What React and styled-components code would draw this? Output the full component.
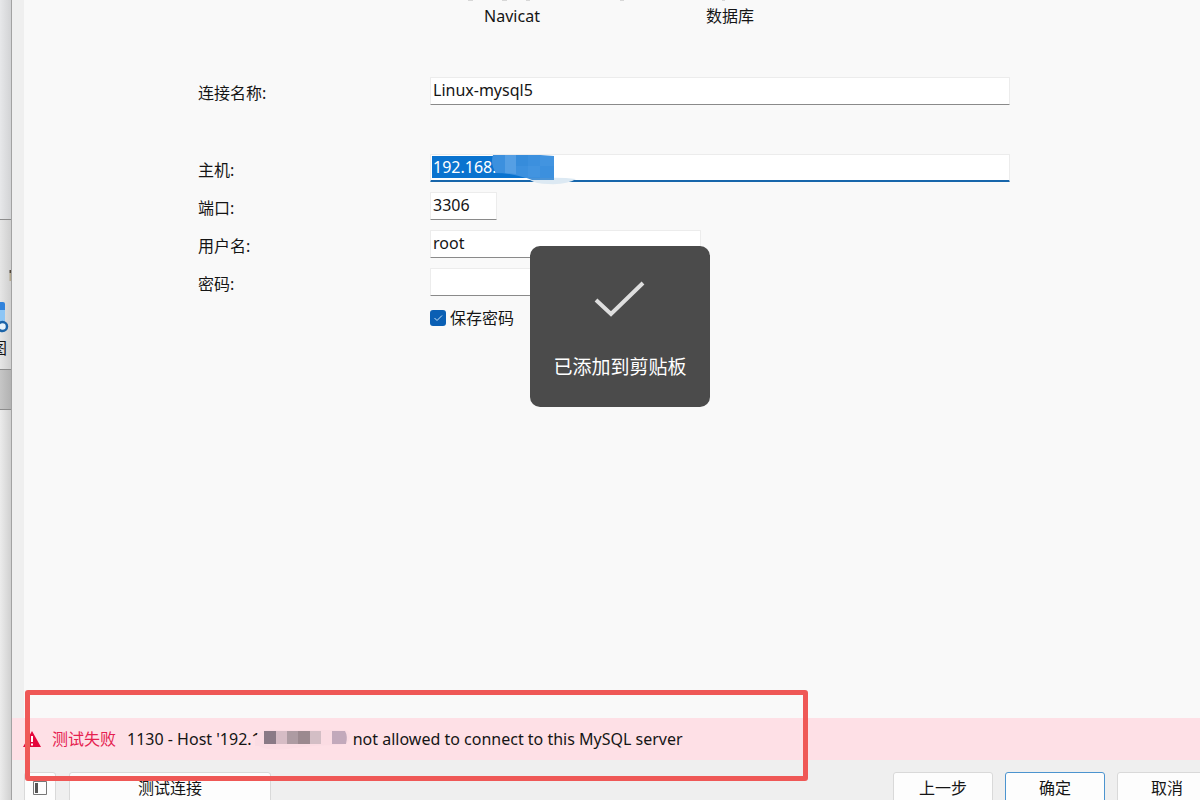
import React from "react";
import styled, { createGlobalStyle } from "styled-components";

const GlobalStyle = createGlobalStyle`
  * { box-sizing: border-box; }
  body {
    margin: 0;
    background: #f0f0f0;
    color: #151515;
    font-family: "Noto Sans", "Noto Sans CJK SC", sans-serif;
    font-size: 16px;
    line-height: 24px;
  }
  button, input { font: inherit; color: inherit; }
`;

const Screen = styled.div`
  position: relative;
  display: flex;
  height: 100vh;
  overflow: hidden;
`;

const BackWindow = styled.div`
  flex: none;
  width: 12px;
  display: flex;
  flex-direction: column;
  overflow: hidden;
  border-right: 1px solid #a2a2a2;
`;

const BackPane = styled.div`
  flex: ${(p) => (p.$height ? "none" : "1")};
  height: ${(p) => (p.$height ? `${p.$height}px` : "auto")};
  background: linear-gradient(to right, ${(p) => p.$from}, ${(p) => p.$to});
  border-bottom: ${(p) => (p.$height ? "1px solid #8c8c8c" : "0")};
`;

const BackToolbar = styled(BackPane)`
  display: flex;
  flex-direction: column;
  align-items: flex-start;
  padding-top: 48px;
`;

const BackLabel = styled.span`
  width: 16px;
  margin-left: -9px;
  font-size: 16px;
  line-height: 24px;
`;

const Dialog = styled.main`
  flex: 1;
  min-width: 0;
  display: flex;
  flex-direction: column;
`;

const Content = styled.section`
  flex: 1;
  min-height: 0;
  border-left: 12px solid #efefef;
  background: #f9f9f9;
`;

const Steps = styled.div`
  display: flex;
  padding: 4px 0 0 379px;
  height: 77px;
`;

const Step = styled.div`
  width: 218px;
  text-align: center;
`;

const Form = styled.form`
  display: grid;
  grid-template-columns: 232px 1fr;
  row-gap: 10px;
  padding: 0 190px 0 174px;
`;

const Label = styled.label`
  padding-top: 4px;
  height: 28px;
`;

const Field = styled.div`
  position: relative;
  height: 28px;
  margin-bottom: ${(p) => (p.$spaced ? "39px" : "0")};
`;

const TextInput = styled.input`
  display: block;
  width: ${(p) => p.$width || "100%"};
  height: 28px;
  padding: 0 2px 2px;
  border: 1px solid #ececec;
  border-bottom-color: #8a8a8a;
  border-radius: 1px;
  background: #fff;
  outline: none;
`;

const SelectedInput = styled(TextInput)`
  color: #fff;
  padding-bottom: 1px;
  border-bottom: 2px solid #1766ab;
  background: linear-gradient(#0a73cf, #0a73cf) 1px 1px / 122px 22px no-repeat #fff;
`;

const HostMask = styled.svg`
  position: absolute;
  left: 60px;
  top: 0;
`;

const CheckRow = styled.label`
  grid-column: 2;
  display: flex;
  align-items: center;
  gap: 4px;
`;

const Checkbox = styled.input`
  appearance: none;
  width: 16px;
  height: 16px;
  margin: 0;
  border-radius: 3px;
  background: #0a5fb4;
`;

const CheckBoxWrap = styled.span`
  position: relative;
  display: flex;
`;

const CheckMark = styled.svg`
  position: absolute;
  inset: 0;
  pointer-events: none;
`;

const Alert = styled.div`
  display: flex;
  align-items: center;
  height: 42px;
  padding-left: 11px;
  background: #fee0e6;
  white-space: pre;
`;

const AlertTitle = styled.span`
  margin: 0 11px;
  color: #e5204f;
`;

const AlertMask = styled.svg`
  flex: none;
  position: relative;
  margin-left: -6px;
`;

const Footer = styled.footer`
  display: flex;
  height: 40px;
  padding: 12px 0 0 12px;
  background: #efefef;
`;

const Button = styled.button`
  flex: none;
  display: flex;
  justify-content: center;
  align-items: center;
  width: ${(p) => p.$width}px;
  height: 32px;
  padding: 0;
  border: 1px solid ${(p) => (p.$primary ? "#4c94cf" : "#d9d9d9")};
  border-radius: 3px;
  background: #fdfdfd;
`;

const Actions = styled.div`
  display: flex;
  gap: 12px;
  margin: 0 -17px 0 auto;
`;

const TestButton = styled(Button)`
  margin-left: 13px;
`;

const Toast = styled.div`
  position: absolute;
  left: 530px;
  top: 246px;
  display: flex;
  flex-direction: column;
  align-items: center;
  width: 180px;
  height: 161px;
  padding-top: 34px;
  border-radius: 10px;
  background: #4b4b4b;
  color: #fff;
  font-size: 19px;
  line-height: 28px;
`;

const ToastText = styled.span`
  margin-top: 33px;
`;

const Highlight = styled.div`
  position: absolute;
  left: 25px;
  bottom: 19px;
  width: 783px;
  height: 91px;
  border: 5px solid #ef5856;
  border-radius: 3px;
  pointer-events: none;
`;

const StepTraces = styled.svg`
  position: absolute;
  left: 460px;
  top: 0;
`;

export default function App() {
  return (
    <>
      <GlobalStyle />
      <Screen>
        <BackWindow>
          <BackPane $height={220} $from="#e7e8ea" $to="#d2d3d5" />
          <BackToolbar $height={150} $from="#e6e6e6" $to="#cfcfcf">
            <svg width="12" height="68" viewBox="0 0 12 68">
              <path d="M10.500 2v3" stroke="#51463b" strokeWidth="2" />
              <path d="M10.500 5v8" stroke="#b3a78c" strokeWidth="2" />
              <path d="M0 34h3q2 0 2 2v6H0z" fill="#3183dc" />
              <path d="M0 42h5v13H0z" fill="#8ec6f5" />
              <circle cx="2.500" cy="58.500" r="4.500" fill="#e8f3fb" stroke="#1c64a8" strokeWidth="2.500" />
            </svg>
            <BackLabel>图</BackLabel>
          </BackToolbar>
          <BackPane $height={40} $from="#c6c6c6" $to="#b2b2b2" />
          <BackPane $from="#ececec" $to="#d0d0d0" />
        </BackWindow>

        <Dialog>
          <Content>
            <Steps>
              <Step>Navicat</Step>
              <Step>数据库</Step>
            </Steps>
            <Form>
              <Label htmlFor="name">连接名称:</Label>
              <Field $spaced>
                <TextInput id="name" defaultValue="Linux-mysql5" />
              </Field>
              <Label htmlFor="host">主机:</Label>
              <Field>
                <SelectedInput id="host" defaultValue="192.168." />
                <HostMask width="90" height="34" viewBox="0 0 90 34">
                  <path d="M40 26Q62 22 86 25Q77 31 58 30Q46 30 40 26z" fill="#dce9f3" />
                  <path d="M34 23L64 23V26H42z" fill="#4a93d6" />
                  <path d="M3 1h47l14 1v22H36Q20 19 6 19Q0 10 3 1z" fill="#3c90de" />
                  <path d="M15 1h11v19l-11-1z" fill="#559fe4" />
                  <path d="M26 1h12v11H26z" fill="#368cdb" />
                  <path d="M38 12h12v11H38zM50 2h14v10H50z" fill="#4294e0" />
                </HostMask>
              </Field>
              <Label htmlFor="port">端口:</Label>
              <Field>
                <TextInput id="port" $width="67px" defaultValue="3306" />
              </Field>
              <Label htmlFor="user">用户名:</Label>
              <Field>
                <TextInput id="user" $width="271px" defaultValue="root" />
              </Field>
              <Label htmlFor="password">密码:</Label>
              <Field>
                <TextInput id="password" type="password" $width="271px" />
              </Field>
              <CheckRow>
                <CheckBoxWrap>
                  <Checkbox type="checkbox" defaultChecked />
                  <CheckMark width="16" height="16" viewBox="0 0 16 16" fill="none" stroke="#c9e2f7">
                    <path d="M4.500 8l2.500 2.500L12 5.500" />
                  </CheckMark>
                </CheckBoxWrap>
                保存密码
              </CheckRow>
            </Form>
          </Content>

          <Alert role="alert">
            <svg width="18" height="18" viewBox="0 0 18 18">
              <path d="M9 1L18 17H0z" fill="#e4073c" />
              <path d="M9 6v6M9 13.500v2" stroke="#fff" strokeWidth="2" />
            </svg>
            <AlertTitle>测试失败</AlertTitle>
            <span>1130 - Host '192.1</span>
            <AlertMask width="98" height="30" viewBox="0 0 98 30">
              <path d="M3 10Q9 5 20 6h68q9 0 7 8q-2 7-11 7Q60 21 40 24Q14 28 4 22H0V12z" fill="#fbdce3" />
              <path d="M9 7h12v13H9z" fill="#8a7a86" />
              <path d="M21 7h11v13H21z" fill="#d6bcc5" />
              <path d="M32 7h11v13H32z" fill="#ad9ba2" />
              <path d="M43 7h12v13H43z" fill="#9b898f" />
              <path d="M55 7h11v13H55z" fill="#d3bec5" />
              <path d="M77 7h13q3 5 1 13H77z" fill="#c2a9bb" />
            </AlertMask>
            <span>not allowed to connect to this MySQL server</span>
          </Alert>

          <Footer>
            <Button type="button" $width={32} aria-label="Toggle panel">
              <svg width="16" height="16" viewBox="0 0 16 16" fill="none">
                <path d="M1.500 1.500h13v13h-13z" stroke="#777" />
                <path d="M3 3h3v10H3z" fill="#555" />
              </svg>
            </Button>
            <TestButton type="button" $width={202}>测试连接</TestButton>
            <Actions>
              <Button type="button" $width={100}>上一步</Button>
              <Button type="button" $width={100} $primary>确定</Button>
              <Button type="button" $width={100}>取消</Button>
            </Actions>
          </Footer>
        </Dialog>

        <StepTraces width="280" height="2" viewBox="0 0 280 2">
          <path d="M8 0h5M42 0h5M66 0h4M160 0h4M262 0h3" stroke="#b5b5b5" />
        </StepTraces>
        <Highlight />
        <Toast role="status">
          <svg width="52" height="40" viewBox="0 0 52 40" fill="none">
            <path d="M2 20L17 34L49 3" stroke="#dedede" strokeWidth="4" />
          </svg>
          <ToastText>已添加到剪贴板</ToastText>
        </Toast>
      </Screen>
    </>
  );
}
